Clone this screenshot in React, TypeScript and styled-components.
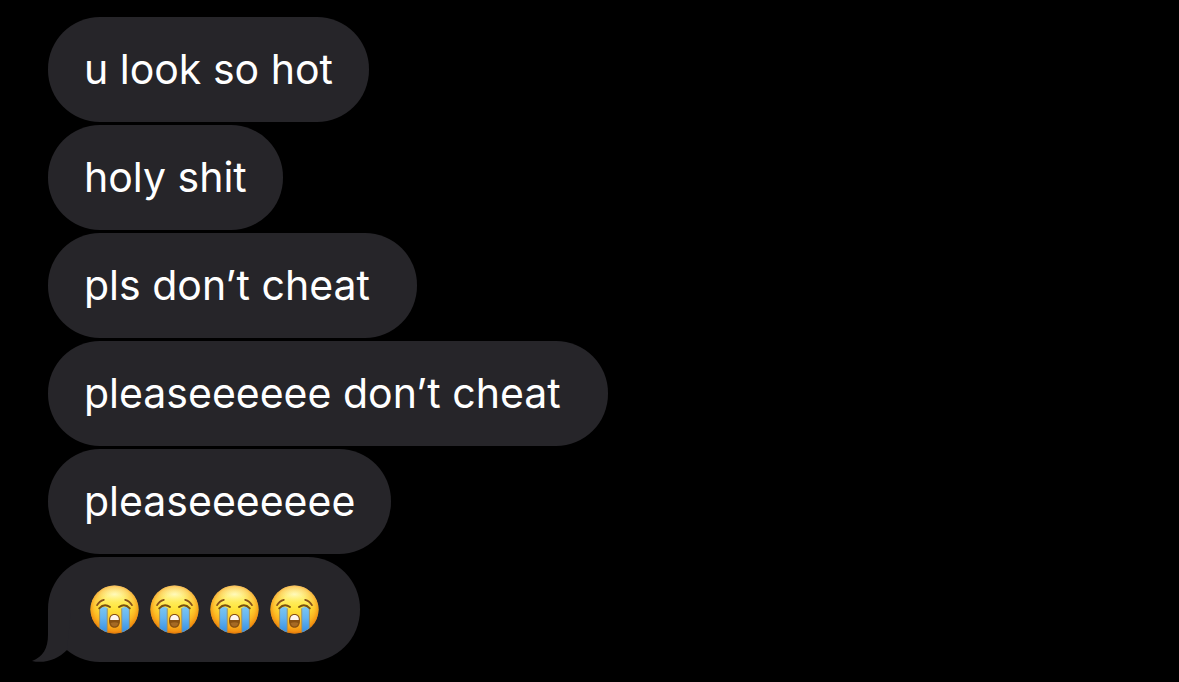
import React, { useId } from "react";
import styled, { createGlobalStyle } from "styled-components";

const GlobalStyle = createGlobalStyle`
  * {
    box-sizing: border-box;
  }
  body {
    margin: 0;
    background: #000000;
  }
`;

const bubbleColor = "#262529";

const Conversation = styled.main`
  min-height: 100vh;
  padding: 17px 48px 20px;
  background: #000000;
  color: #ffffff;
  font-family: Inter, "Liberation Sans", sans-serif;
  font-size: 41px;
  line-height: 49px;
`;

const MessageList = styled.ul`
  display: flex;
  flex-direction: column;
  align-items: flex-start;
  gap: 3px;
  margin: 0;
  padding: 0;
  list-style: none;
`;

const Bubble = styled.li`
  position: relative;
  display: flex;
  align-items: center;
  min-height: 105px;
  padding: 28px 36px;
  border-radius: 52px;
  background: ${bubbleColor};
  white-space: pre-wrap;
`;

const Tail = styled.svg`
  position: absolute;
  left: -17px;
  bottom: 0;
  width: 57px;
  height: 53px;
`;

const EmojiSlot = styled.span`
  display: flex;
  justify-content: center;
  width: 60px;
`;

const EmojiArt = styled.svg`
  width: 49px;
  height: 49px;
`;

function CryingFace() {
  const id = useId().replace(/[^a-zA-Z0-9]/g, "");
  return (
    <EmojiSlot>
      <EmojiArt viewBox="0 0 50 50" role="img" aria-label="loudly crying face">
        <defs>
          <linearGradient id={`${id}face`} x1="0" y1="0" x2="0" y2="1">
            <stop offset="0" stopColor="#fff6b0" />
            <stop offset="0.2" stopColor="#fff27c" />
            <stop offset="0.48" stopColor="#ffe53c" />
            <stop offset="0.72" stopColor="#fdc628" />
            <stop offset="1" stopColor="#f7a51c" />
          </linearGradient>
          <radialGradient id={`${id}rim`} cx="0.5" cy="0.46" r="0.54">
            <stop offset="0.5" stopColor="#f8940f" stopOpacity="0" />
            <stop offset="0.78" stopColor="#f8940f" stopOpacity="0.4" />
            <stop offset="0.92" stopColor="#f0860c" stopOpacity="0.75" />
            <stop offset="1" stopColor="#dd7208" stopOpacity="0.95" />
          </radialGradient>
          <radialGradient id={`${id}shine`} cx="0.5" cy="0.5" r="0.5">
            <stop offset="0" stopColor="#fffbd0" stopOpacity="0.75" />
            <stop offset="1" stopColor="#fff27c" stopOpacity="0" />
          </radialGradient>
          <linearGradient id={`${id}tear`} x1="0" y1="0" x2="0" y2="1">
            <stop offset="0" stopColor="#79c5f2" />
            <stop offset="0.4" stopColor="#64b4f0" />
            <stop offset="1" stopColor="#318be2" />
          </linearGradient>
          <clipPath id={`${id}clip`}>
            <circle cx="25" cy="25" r="24.5" />
          </clipPath>
        </defs>
        <circle cx="25" cy="25" r="24.5" fill={`url(#${id}face)`} />
        <circle cx="25" cy="25" r="24.5" fill={`url(#${id}rim)`} />
        <ellipse cx="25" cy="9.5" rx="17" ry="8.5" fill={`url(#${id}shine)`} />
        <g clipPath={`url(#${id}clip)`}>
          <path d="M9.7 23.5 Q14 21.5 18 23.5 L17.2 50 H9.7 Z" fill={`url(#${id}tear)`} />
          <path d="M40.3 23.5 Q36 21.5 32 23.5 L32.8 50 H40.3 Z" fill={`url(#${id}tear)`} />
          <path d="M9.8 24 V50 M40.2 24 V50" fill="none" stroke="#a28a55" strokeWidth="0.8" />
          <path d="M17.6 24 V50 M32.4 24 V50" fill="none" stroke="#a3915d" strokeWidth="0.9" />
        </g>
        <path d="M7.2 20.6 Q9.6 16.2 14.1 15.1 M42.8 20.6 Q40.4 16.2 35.9 15.1" fill="none" stroke="#87501b" strokeWidth="1.8" strokeLinecap="round" />
        <path d="M9.4 23.8 Q14.5 18.4 20.4 22.5 M40.6 23.8 Q35.5 18.4 29.6 22.5" fill="none" stroke="#78500f" strokeWidth="2" strokeLinecap="round" />
        <path d="M25 29.7 C28.8 29.7 30.6 32.5 30.6 36.2 C30.6 41 28.5 43.6 25 43.6 C21.5 43.6 19.4 41 19.4 36.2 C19.4 32.5 21.2 29.7 25 29.7 Z" fill="#875012" />
        <path d="M25 30.5 C28.2 30.5 29.5 32.7 29.4 35.7 H20.6 C20.5 32.7 21.8 30.5 25 30.5 Z" fill="#fff6ee" />
        <path d="M21.1 38.7 Q25 37.5 28.9 38.7 Q28 42.3 25 42.4 Q22 42.3 21.1 38.7 Z" fill="#a66a24" />
      </EmojiArt>
    </EmojiSlot>
  );
}

function BubbleTail() {
  return (
    <Tail viewBox="0 0 57 53" aria-hidden="true">
      <path d="M17 0 V26 C17 39 12 48 1 52 C14 55 27 50 36 41 L40 0 Z" fill={bubbleColor} />
    </Tail>
  );
}

const messages = [
  "u look so hot",
  "holy shit",
  "pls don’t cheat ",
  "pleaseeeeee don’t cheat ",
  "pleaseeeeeee",
];

export default function App() {
  return (
    <>
      <GlobalStyle />
      <Conversation>
        <MessageList>
          {messages.map((text) => (
            <Bubble key={text}>{text}</Bubble>
          ))}
          <Bubble>
            <BubbleTail />
            <CryingFace />
            <CryingFace />
            <CryingFace />
            <CryingFace />
          </Bubble>
        </MessageList>
      </Conversation>
    </>
  );
}
